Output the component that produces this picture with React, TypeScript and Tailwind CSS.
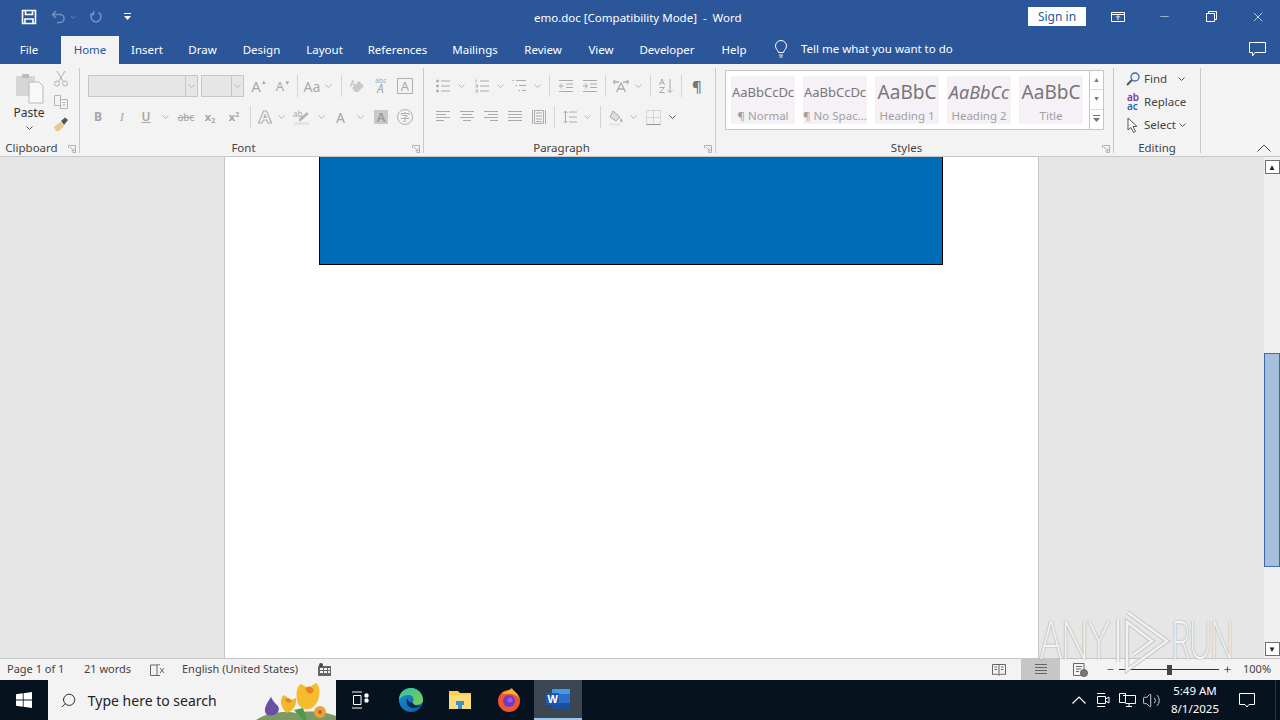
import { ReactNode } from 'react';
import { Minus, Plus, Search, Volume2, X } from 'lucide-react';

const G = '#ababab';

function Ic({ children, size = 16, color = G }: { children: ReactNode; size?: number; color?: string }) {
  return (
    <svg width={size} height={size} viewBox="0 0 16 16" fill="none" stroke={color} strokeWidth="1">
      {children}
    </svg>
  );
}

function Chev({ dark }: { dark?: boolean }) {
  return (
    <svg className="shrink-0" width="7" height="4" viewBox="0 0 7 4" fill="none" stroke={dark ? '#555' : '#b5b5b5'}>
      <path d="M.5.5 3.5 3.5 6.5.5" />
    </svg>
  );
}

// fixed width cell for ribbon items
function Cell({ w, children }: { w: number; children?: ReactNode }) {
  return (
    <div className="flex h-[22px] shrink-0 items-center justify-center" style={{ width: w }}>
      {children}
    </div>
  );
}

function Sep() {
  return <div className="mx-px h-[22px] w-px shrink-0 bg-[#d4d4d4]" />;
}

function Lines({ rows, color }: { rows: [number, number][]; color?: string }) {
  return (
    <Ic color={color}>
      {rows.map(([a, b], i) => (
        <path key={i} d={`M${a} ${2.5 + i * 3}H${b}`} />
      ))}
    </Ic>
  );
}

function Launcher() {
  return (
    <svg width="8" height="8" viewBox="0 0 8 8" fill="none" stroke="#b0b0b0" className="absolute right-[3px] -bottom-[0px]">
      <path d="M.5 3V.5H7.5V7.5H4.5M2 2 6 6M6 3.5V6H3.5" />
    </svg>
  );
}

function Group({ w, label, children, launcher = true }: { w: number; label: string; children: ReactNode; launcher?: boolean }) {
  return (
    <div className="relative h-[85px] border-r border-[#c8c8c8]" style={{ width: w }}>
      <div className="h-[72px]">{children}</div>
      <div className={`text-center text-[11.5px] leading-[16px] text-[#444] ${launcher ? 'pr-[16px]' : ''}`}>{label}</div>
      {launcher && <Launcher />}
    </div>
  );
}

function Tab({ label, w, active }: { label: string; w: number; active?: boolean }) {
  return (
    <div
      className={`flex h-7 items-center justify-center text-[11.5px] ${active ? 'bg-[#f3f3f3] text-[#2b579a]' : 'text-white'}`}
      style={{ width: w }}
    >
      {label}
    </div>
  );
}

function StyleItem({ sample, name, className }: { sample: string; name: string; className: string }) {
  return (
    <div className="flex h-12 w-16 flex-col items-center overflow-hidden bg-[#f6f1f6]">
      <div className={`flex h-[32px] w-full items-center justify-center overflow-hidden pt-[1px] whitespace-nowrap ${className}`}>{sample}</div>
      <div className="text-[11.5px] leading-[16px] whitespace-nowrap text-[#a0a0a0]">{name}</div>
    </div>
  );
}

function TitleBar() {
  return (
    <div className="flex h-9 items-center bg-[#2b579a] text-white">
      <div className="-mt-[2px] flex w-[400px] items-center pl-[21px]">
        <svg width="16" height="16" viewBox="0 0 16 16" fill="none" stroke="white" strokeWidth="1.6">
          <path d="M1.5 1.5H14.5V14.5H1.5Z" />
          <path d="M4.5 1.5V5.5H11.5V1.5M4 14.5V10H12V14.5" />
        </svg>
        <svg className="ml-[14px]" width="15" height="14" viewBox="0 0 15 14" fill="none" stroke="#6f8fc0" strokeWidth="1.6">
          <path d="M5 1 1.5 4.5 5 8M2 4.5H9A4 4 0 0 1 9 12.5H6" />
        </svg>
        <svg className="ml-[4px]" width="6" height="4" viewBox="0 0 7 4" fill="none" stroke="#6f8fc0">
          <path d="M.5.5 3.5 3.5 6.5.5" />
        </svg>
        <svg className="ml-[13px]" width="14" height="14" viewBox="0 0 14 14" fill="none" stroke="#6f8fc0" strokeWidth="1.7">
          <path d="M9.5 2.5A5 5 0 1 1 4.5 2.5M4.500 1V4.500H1" />
        </svg>
        <svg className="ml-[21px]" width="7" height="8" viewBox="0 0 7 8" fill="white">
          <path d="M0 0H7V1H0ZM0 3H7L3.5 7Z" />
        </svg>
      </div>
      <div className="w-[464px] pl-[134px] text-[11.5px] whitespace-pre">emo.doc [Compatibility Mode]  -  Word</div>
      <div className="-mt-[4px] ml-[164px] flex h-[19px] w-[58px] items-center justify-center bg-white pt-px text-[12px] text-[#2b579a]">Sign in</div>
      <div className="-mt-[3px] ml-[25px] flex w-[14px] justify-center">
        <svg width="14" height="12" viewBox="0 0 14 12" fill="none" stroke="white">
          <path d="M.5 1.5H13.5V10.5H.5ZM.5 3.5H13.5M7 9V5M5 6.5 7 4.5 9 6.5" />
        </svg>
      </div>
      <Minus className="-mt-[3px] ml-[33px]" size={13} strokeWidth={1} />
      <div className="-mt-[3px] ml-[35px] flex w-[12px]">
        <svg width="11" height="11" viewBox="0 0 11 11" fill="none" stroke="white">
          <path d="M.5 2.5H8.5V10.5H.5ZM2.5 2.5V.5H10.5V8.5H8.5" />
        </svg>
      </div>
      <X className="-mt-[3px] ml-[32px]" size={16} strokeWidth={1} />
    </div>
  );
}

function TabRow() {
  return (
    <div className="flex h-7 items-center bg-[#2b579a]">
      <Tab label="File" w={58} />
      <div className="w-[3px]" />
      <Tab label="Home" w={58} active />
      <Tab label="Insert" w={56} />
      <Tab label="Draw" w={55} />
      <Tab label="Design" w={63} />
      <Tab label="Layout" w={63} />
      <Tab label="References" w={83} />
      <Tab label="Mailings" w={72} />
      <Tab label="Review" w={64} />
      <Tab label="View" w={52} />
      <Tab label="Developer" w={80} />
      <Tab label="Help" w={54} />
      <svg className="-mt-[2px] ml-[13px]" width="14" height="18" viewBox="0 0 14 18" fill="none" stroke="white">
        <path d="M4.5 12.5C4 10 1.5 9 1.5 6A5.5 5.5 0 0 1 12.5 6C12.5 9 10 10 9.500 12.500ZM5 15H9M5.500 17H8.500" />
      </svg>
      <div className="-mt-[2px] ml-[13px] text-[11.5px] whitespace-nowrap text-white">Tell me what you want to do</div>
      <div className="flex-1" />
      <svg className="-mt-[2px] mr-[14px]" width="17" height="15" viewBox="0 0 17 15" fill="none" stroke="white">
        <path d="M.5.5H16.500V10.500H6L3.500 14V10.500H.5Z" />
      </svg>
    </div>
  );
}

function Clipboard() {
  return (
    <Group w={80} label="Clipboard">
      <div className="flex">
        <div className="flex w-[50px] flex-col items-center pt-[4px] pl-[8px]">
          <svg width="30" height="32" viewBox="0 0 30 32">
            <path d="M2 4H21V24H2Z" fill="#d6d6d6" />
            <path d="M8 2H15V6H8Z" fill="#bdbdbd" />
            <path d="M15 10H25L29 14V31H15Z" fill="#f8f8f8" stroke="#b9b9b9" />
          </svg>
          <div className="mt-[1px] text-[12px] leading-[16px] text-[#333]">Paste</div>
          <div className="mt-[5px]"><Chev dark /></div>
        </div>
        <div className="flex flex-col items-center pt-[2px] pl-[3px]">
          <svg width="16" height="17" viewBox="0 0 16 17" fill="none" stroke="#b0b0b0">
            <path d="M4 1 10 11M12 1 6 11" />
            <circle cx="4" cy="13.500" r="2.500" />
            <circle cx="12" cy="13.500" r="2.500" />
          </svg>
          <svg className="mt-[7px]" width="16" height="16" viewBox="0 0 16 16" fill="none" stroke="#b5b5b5">
            <path d="M1.500 1.500H7.500V11.500H1.500ZM7.500 5.500H14.500V14.500H7.500ZM9.500 8.500H12.500M9.500 11H12.500" />
          </svg>
          <svg className="mt-[6px]" width="16" height="16" viewBox="0 0 16 16">
            <path d="M1 11 7 6 11 10 6 15H3Z" fill="#e8c98a" />
            <path d="M8 5 12 1.500 15 4 11 9Z" fill="#555" />
          </svg>
        </div>
      </div>
    </Group>
  );
}

function FontGroup() {
  return (
    <Group w={344} label="Font">
      <div className="flex flex-col gap-[9px] pt-[7px] pl-[8px]">
        <div className="flex items-center">
          <div className="flex h-[22px] w-[110px] border border-[#c6c6c6] bg-[#e6e6e6]">
            <div className="flex-1" />
            <div className="flex w-[12px] items-center justify-center border-l border-[#c6c6c6]"><Chev /></div>
          </div>
          <div className="ml-[3px] flex h-[22px] w-[43px] border border-[#c6c6c6] bg-[#e6e6e6]">
            <div className="flex-1" />
            <div className="flex w-[12px] items-center justify-center border-l border-[#c6c6c6]"><Chev /></div>
          </div>
          <Cell w={30}><span className="text-[15px] leading-none text-[#aaa]">A<span className="align-top text-[6px]">▲</span></span></Cell>
          <Cell w={18}><span className="text-[13px] leading-none text-[#aaa]">A<span className="align-top text-[6px]">▼</span></span></Cell>
          <Cell w={4} />
          <Sep />
          <Cell w={26}><span className="text-[14px] text-[#aaa]">Aa</span></Cell>
          <Cell w={6}><Chev /></Cell>
          <Cell w={9} />
          <Sep />
          <Cell w={28}>
            <svg width="15" height="15" viewBox="0 0 15 15">
              <path d="M2 9 9 2 14 7 8 13H5Z" fill="#c9c9c9" />
              <text x="0" y="8" fontSize="8" fill="#b5b5b5">A</text>
            </svg>
          </Cell>
          <Cell w={20}>
            <svg width="16" height="18" viewBox="0 0 16 18" fill="#a8a8a8">
              <text x="2" y="6" fontSize="7">abc</text>
              <text x="4" y="16" fontSize="12" fontStyle="italic">A</text>
            </svg>
          </Cell>
          <Cell w={28}>
            <div className="flex h-[16px] w-[16px] items-center justify-center border border-[#b0b0b0] text-[13px] leading-none text-[#aaa]">A</div>
          </Cell>
        </div>
        <div className="flex items-center text-[#a6a6a6]">
          <Cell w={20}><b className="text-[12px]">B</b></Cell>
          <Cell w={28}><i className="font-['Liberation_Serif'] text-[13px]">I</i></Cell>
          <Cell w={20}><span className="text-[12px] font-semibold underline">U</span></Cell>
          <Cell w={18}><Chev /></Cell>
          <Cell w={24}><span className="text-[10px] line-through">abc</span></Cell>
          <Cell w={24}><b className="text-[11px]">x<sub className="text-[7px]">2</sub></b></Cell>
          <Cell w={24}><b className="text-[11px]">x<sup className="text-[7px]">2</sup></b></Cell>
          <Cell w={3} />
          <Sep />
          <Cell w={26}>
            <svg width="16" height="16" viewBox="0 0 16 16" fill="none" stroke="#b0b0b0" strokeWidth="1.200">
              <path d="M1.500 14 6.500 2H9.500L14.500 14H11L9.800 11H6.200L5 14ZM7 8.500H9L8 6Z" />
            </svg>
          </Cell>
          <Cell w={6}><Chev /></Cell>
          <Cell w={34}>
            <svg width="17" height="16" viewBox="0 0 17 16">
              <path d="M1 13H16V16H1Z" fill="#e4e4e4" />
              <path d="M6 10 14 3 15.500 5 8 12H6Z" fill="#b5b5b5" />
              <text x="0" y="8" fontSize="8" fill="#aaa">ab</text>
            </svg>
          </Cell>
          <Cell w={6}><Chev /></Cell>
          <Cell w={33}><span className="text-[14px]">A</span></Cell>
          <Cell w={6}><Chev /></Cell>
          <Cell w={36}>
            <div className="flex h-[14px] w-[14px] items-center justify-center bg-[#c8c8c8] text-[13px] leading-none font-semibold text-[#999]">A</div>
          </Cell>
          <Cell w={12}>
            <div className="flex h-[16px] w-[16px] shrink-0 items-center justify-center rounded-full border border-[#b0b0b0] font-['Noto_Sans_CJK_SC'] text-[10px] leading-none">字</div>
          </Cell>
        </div>
      </div>
    </Group>
  );
}

const bullets = (
  <Ic>
    <path d="M6 3H15M6 8H15M6 13H15" />
    <circle cx="2.500" cy="3" r="1" fill={G} />
    <circle cx="2.500" cy="8" r="1" fill={G} />
    <circle cx="2.500" cy="13" r="1" fill={G} />
  </Ic>
);

const numbers = (
  <Ic>
    <path d="M6 3H15M6 8H15M6 13H15M2 1.500V4.500M1.500 7H3.500V9H1.500M1.500 12H3.500V14H1.500" />
  </Ic>
);

function ParagraphGroup() {
  return (
    <Group w={292} label="Paragraph">
      <div className="flex flex-col gap-[9px] pt-[7px] pl-[10px]">
        <div className="flex items-center">
          <Cell w={18}>{bullets}</Cell>
          <Cell w={18}><Chev /></Cell>
          <Cell w={24}>{numbers}</Cell>
          <Cell w={12}><Chev /></Cell>
          <Cell w={26}>
            <Ic><path d="M5 2.500H15M8 7.500H15M11 12.500H15M1.500 2.500H3M4.500 7.500H6M7.500 12.500H9" /></Ic>
          </Cell>
          <Cell w={10}><Chev /></Cell>
          <Cell w={6} />
          <Sep />
          <Cell w={30}>
            <Ic><path d="M1 2.500H15M8 6H15M8 9.500H15M1 13.500H15M6 8H1.500M4 5.500 1.500 8 4 10.500" /></Ic>
          </Cell>
          <Cell w={18}>
            <Ic><path d="M1 2.500H15M8 6H15M8 9.500H15M1 13.500H15M1 8H5.500M3 5.500 5.500 8 3 10.500" /></Ic>
          </Cell>
          <Cell w={5} />
          <Sep />
          <Cell w={28}>
            <Ic><path d="M2 4H6M2 2 0.500 4 2 6M14 4H10M14 2 15.500 4 14 6M3.500 14 8 5 12.500 14M5 11H11" strokeWidth="1.300" /></Ic>
          </Cell>
          <Cell w={6}><Chev /></Cell>
          <Cell w={8} />
          <Sep />
          <Cell w={28}>
            <Ic><path d="M1.500 7 4 1 6.500 7M2.500 5H5.500M1.500 9.500H6.500L1.500 14.500H6.500M12 1V14.500M9.500 12 12 14.500 14.500 12" /></Ic>
          </Cell>
          <Sep />
          <Cell w={28}><span className="text-[15px] font-semibold text-[#777]">¶</span></Cell>
        </div>
        <div className="flex items-center">
          <Cell w={18}><Lines rows={[[1, 15], [1, 11], [1, 15], [1, 9]]} /></Cell>
          <Cell w={3} />
          <Cell w={24}><Lines rows={[[1, 15], [3, 13], [1, 15], [4, 12]]} /></Cell>
          <Cell w={24}><Lines rows={[[1, 15], [5, 15], [1, 15], [7, 15]]} /></Cell>
          <Cell w={24}><Lines rows={[[1, 15], [1, 15], [1, 15], [1, 15]]} /></Cell>
          <Cell w={24}>
            <Ic><path d="M1.500 1V15M14.500 1V15M3.500 1.500H12.500V14.500H3.500ZM5 4H11M5 7H11M5 10H11M5 12.500H11" /></Ic>
          </Cell>
          <Cell w={2} />
          <Sep />
          <Cell w={28}>
            <Ic><path d="M7 3H15M7 8H15M7 13H15M3.500 2V14M1.500 4 3.500 2 5.500 4M1.500 12 3.500 14 5.500 12" /></Ic>
          </Cell>
          <Cell w={6}><Chev /></Cell>
          <Cell w={9} />
          <Sep />
          <Cell w={28}>
            <svg width="16" height="17" viewBox="0 0 16 17">
              <path d="M5 2 12 8 8 12 2 8Z" fill="#ddd" stroke="#aaa" />
              <path d="M13 9C15 11 15 13 13.500 13S12 11 13 9Z" fill="#aaa" />
              <path d="M1 14.500H12V16.500H1Z" fill="#e3e3e3" />
            </svg>
          </Cell>
          <Cell w={6}><Chev /></Cell>
          <Cell w={2} />
          <Cell w={31}>
            <svg width="15" height="15" viewBox="0 0 15 15" fill="none" stroke="#bbb" strokeDasharray="1 1">
              <path d="M.5.5H14.500V14.500H.5ZM7.500.5V14.500M.5 7.500H14.500" />
              <path d="M.5 14.500H14.500" stroke="#999" strokeDasharray="none" />
            </svg>
          </Cell>
          <Cell w={6}><Chev dark /></Cell>
        </div>
      </div>
    </Group>
  );
}

function StylesGroup() {
  const btn = 'flex h-[20px] items-center justify-center border-b border-[#dcdcdc] last:border-b-0';
  return (
    <Group w={398} label="Styles">
      <div className="pt-[2px] pl-[9px]">
        <div className="flex h-[60px] w-[379px] items-center border border-[#c6c6c6] bg-white pl-[5px]">
          <div className="flex flex-1 gap-2">
            <StyleItem sample="AaBbCcDc" name="¶ Normal" className="text-[13px] text-[#777]" />
            <StyleItem sample="AaBbCcDc" name="¶ No Spac..." className="text-[13px] text-[#777]" />
            <StyleItem sample="AaBbC" name="Heading 1" className="text-[19px] text-[#777]" />
            <StyleItem sample="AaBbCc" name="Heading 2" className="text-[18px] text-[#777] italic" />
            <StyleItem sample="AaBbC" name="Title" className="text-[19px] text-[#777]" />
          </div>
          <div className="flex h-full w-[14px] flex-col border-l border-[#c6c6c6]">
            <div className={btn}><span className="text-[7px] text-[#777]">▲</span></div>
            <div className={btn}><span className="text-[7px] text-[#777]">▼</span></div>
            <div className={btn}>
              <svg width="7" height="8" viewBox="0 0 7 8" fill="#777"><path d="M0 0H7V1H0ZM0 3H7L3.500 7Z" /></svg>
            </div>
          </div>
        </div>
      </div>
    </Group>
  );
}

function EditingGroup() {
  return (
    <Group w={87} label="Editing" launcher={false}>
      <div className="flex flex-col gap-[3px] pt-[1px] pl-[11px] text-[11.5px] leading-[20px] text-[#444]">
        <div className="flex items-center">
          <svg width="16" height="16" viewBox="0 0 16 16" fill="none" stroke="#2b6cb0" strokeWidth="1.300">
            <circle cx="10" cy="6" r="4" />
            <path d="M7 9 2 14" stroke="#555" strokeWidth="2" />
          </svg>
          <span className="ml-[3px]">Find</span>
          <span className="ml-[11px]"><Chev dark /></span>
        </div>
        <div className="flex items-center">
          <svg width="16" height="18" viewBox="0 0 16 18" fontWeight="600" fontSize="10">
            <text x="2" y="8" fill="#7b3f98">ab</text>
            <text x="2" y="17" fill="#2b6cb0">ac</text>
          </svg>
          <span className="ml-[3px]">Replace</span>
        </div>
        <div className="flex items-center">
          <svg className="ml-[1px]" width="14" height="17" viewBox="0 0 14 17" fill="white" stroke="#555">
            <path d="M2 1V13L5 10.500 7.500 15.500 9.500 14.500 7 9.500H11Z" />
          </svg>
          <span className="ml-[4px]">Select</span>
          <span className="ml-[3px]"><Chev dark /></span>
        </div>
      </div>
    </Group>
  );
}

function Ribbon() {
  return (
    <div className="flex h-[93px] border-b border-[#c6c6c6] bg-[#f3f3f3] pt-1">
      <Clipboard />
      <FontGroup />
      <ParagraphGroup />
      <StylesGroup />
      <EditingGroup />
      <div className="flex flex-1 items-end justify-end pr-[9px] pb-[4px]">
        <svg width="14" height="8" viewBox="0 0 14 8" fill="none" stroke="#444">
          <path d="M.5 7.500 7 1 13.500 7.500" />
        </svg>
      </div>
    </div>
  );
}

function Scrollbar() {
  const arrow = 'mx-auto flex h-[14px] w-[15px] items-center justify-center border border-[#6d6d6d] bg-white text-[8px] text-[#222]';
  return (
    <div className="flex w-4 flex-col bg-[#f0f0f0] pt-[3px] pb-[2px]">
      <div className={arrow}>▲</div>
      <div className="h-[179px]" />
      <div className="h-[214px] border border-[#3d6aa6] bg-[#a6bfdc]" />
      <div className="flex-1" />
      <div className={arrow}>▼</div>
    </div>
  );
}

function Doc() {
  return (
    <div className="flex min-h-0 flex-1">
      <div className="flex-1 bg-[#e6e6e6] pl-[224px]">
        <div className="h-full w-[815px] border-x border-[#c6c6c6] bg-white pl-[94px]">
          <div className="h-[108px] w-[624px] border border-t-0 border-black bg-[#006cb8]" />
        </div>
      </div>
      <Scrollbar />
    </div>
  );
}

function StatusBar() {
  return (
    <div className="flex h-[22px] items-center border-t border-[#c6c6c6] bg-[#f3f3f3] text-[11px] text-[#444]">
      <span className="ml-[7px] w-[77px]">Page 1 of 1</span>
      <span className="w-[65px]">21 words</span>
      <svg width="16" height="14" viewBox="0 0 16 14" fill="none" stroke="#666">
        <path d="M8 2H1.500V12.500H8V2C9 1.500 10 1.500 11 2M11 12.500H8M11 5 15 10M15 5 11 10" />
      </svg>
      <span className="ml-[17px] w-[136px]">English (United States)</span>
      <svg width="13" height="13" viewBox="0 0 13 13">
        <path d="M0 3H13V13H0Z" fill="#666" />
        <path d="M2 5H5V7H2ZM6 5H9V7H6ZM10 5H12V7H10ZM2 8H5V10H2ZM6 8H9V10H6ZM10 8H12V10H10Z" fill="#f3f3f3" />
        <circle cx="3" cy="2" r="2" fill="#444" />
      </svg>
      <div className="ml-[661px] flex h-full items-center">
        <svg width="14" height="13" viewBox="0 0 14 13" fill="none" stroke="#666">
          <path d="M.5 1.500H7V12C5 11 3 11 .5 11.500ZM7 1.500H13.500V11.500C11 11 9 11 7 12M2.500 4H5M2.500 6.500H5M9 4H11.500M9 6.500H11.500" />
        </svg>
        <div className="ml-[15px] flex h-full w-[39px] items-center justify-center bg-[#c6c6c6]">
          <Lines color="#666" rows={[[2, 14], [2, 14], [2, 14], [2, 14]]} />
        </div>
        <svg className="ml-[13px]" width="15" height="14" viewBox="0 0 15 14" fill="none" stroke="#666">
          <path d="M9 12.500H.5V.5H11V6M3 3.500H9M3 6H8M3 8.500H6" />
          <circle cx="11" cy="10" r="3.500" fill="#777" />
        </svg>
        <Minus className="ml-[18px]" size={9} color="#333" />
        <div className="ml-[4px] flex h-[1px] w-[100px] items-center justify-center bg-[#333]">
          <div className="h-[10px] w-[5px] bg-[#444]" />
        </div>
        <Plus className="ml-[4px]" size={9} color="#333" />
        <span className="ml-[11px]">100%</span>
      </div>
    </div>
  );
}

function Taskbar() {
  return (
    <div className="flex h-10 items-center bg-[#07121f] text-white">
      <div className="flex w-12 justify-center">
        <svg width="16" height="16" viewBox="0 0 16 16" fill="white">
          <path d="M0 2.300 6.800 1.300V7.600H0ZM7.600 1.200 16 0V7.600H7.600ZM0 8.400H6.800V14.700L0 13.700ZM7.600 8.400H16V16L7.600 14.800Z" />
        </svg>
      </div>
      <div className="flex h-full w-[288px] items-center overflow-hidden bg-[#f3f3f3] pl-[12px] text-[#222]">
        <Search size={17} strokeWidth={1.2} className="-scale-x-100" color="#111" />
        <span className="ml-[11px] w-[170px] text-[14px] whitespace-nowrap">Type here to search</span>
        <svg className="shrink-0" width="80" height="40" viewBox="0 0 80 40">
          <path d="M0 40C12 32 30 31 40 33 55 30 70 32 80 36V40Z" fill="#7d9a64" />
          <path d="M15 17C11 23 6 30 11 35 19 37 25 32 22 26 19 23 17 21 15 17Z" fill="#6a4fa3" />
          <path d="M28 15C23 18 24 28 31 33 37 31 41 26 40 18L35 20Z" fill="#f3b72c" />
          <path d="M45 4C41 6 39 14 42 24 47 32 58 31 62 20 65 12 63 5 60 3L52 8Z" fill="#f5bd2d" />
          <path d="M49 9C52 5 55 6 58 10 56 15 52 15 49 9Z" fill="#e58325" />
          <path d="M29 20C31 17 34 18 36 21 34 24 31 23 29 20Z" fill="#e58325" />
          <circle cx="64" cy="32" r="6" fill="#eba23a" />
          <circle cx="64" cy="32" r="2" fill="#c4621f" />
          <path d="M47 28 51 40H47L38 30Z" fill="#4f9a4a" />
        </svg>
      </div>
      <div className="ml-[15px] flex w-[18px] justify-center">
        <svg width="18" height="18" viewBox="0 0 18 18" fill="none" stroke="white">
          <path d="M1 1H11M1 17H11M2.500 4.500H10V13.500H2.500Z" />
          <path d="M14 3H17V6H14ZM14 8H17V11H14Z" fill="white" />
        </svg>
      </div>
      <div className="ml-[29px] flex w-[26px] justify-center">
        <svg width="26" height="26" viewBox="0 0 26 26">
          <defs>
            <linearGradient id="edgeA" x1="0" y1="0" x2="1" y2="1">
              <stop offset="0" stopColor="#35c1a0" />
              <stop offset="1" stopColor="#7ad14e" />
            </linearGradient>
            <linearGradient id="edgeB" x1="0" y1="0" x2="1" y2="1">
              <stop offset="0" stopColor="#1b8fd6" />
              <stop offset="1" stopColor="#0d5ca6" />
            </linearGradient>
          </defs>
          <circle cx="13" cy="13" r="12" fill="url(#edgeB)" />
          <path d="M1 13C1 5 7 1 13 1 20 1 25 7 25 13 25 17 21 18 17 18 14 18 13 17 14.500 15.500 17 13 15 8 11 8 6 8 3 10 1 13Z" fill="url(#edgeA)" />
          <path d="M14.500 15.500C12 16 9 14 10 11 7 14 9 21 15 21 19 21 22 20 24 18 21 19 16 19 14.500 15.500Z" fill="#0a2a55" />
        </svg>
      </div>
      <div className="ml-[25px] flex w-[22px] justify-center">
        <svg width="22" height="20" viewBox="0 0 22 20">
          <path d="M0 1H9L11 3H22V19H0Z" fill="#f7cf52" />
          <path d="M0 5H22V19H0Z" fill="#fbdc78" />
          <path d="M7 11H15V15H13V19H9V15H7Z" fill="#3a8fd6" />
        </svg>
      </div>
      <div className="ml-[26px] flex w-[24px] justify-center">
        <svg width="24" height="24" viewBox="0 0 24 24">
          <circle cx="12" cy="13" r="11" fill="#f0552b" />
          <path d="M5 5C9 4 14 1 15 0 16 3 22 6 23 13 22 8 17 6 14 6 10 5 7 7 5 5Z" fill="#fbb125" />
          <circle cx="12" cy="13" r="6" fill="#6e3bc9" />
          <circle cx="13" cy="12" r="2.500" fill="#a35be0" />
        </svg>
      </div>
      <div className="ml-[13px] flex h-full w-12 items-center justify-center border-b-[2px] border-[#9cc4ec] bg-[#3b4650]">
        <svg width="24" height="20" viewBox="0 0 24 20">
          <path d="M6 0H24V20H6Z" fill="#2b6fc7" />
          <path d="M6 0H24V5H6Z" fill="#3f9ae8" />
          <path d="M6 14H24V20H6Z" fill="#1b4e9c" />
          <path d="M0 4H13V16H0Z" fill="#1f56ad" />
          <text x="1.500" y="14" fontSize="11" fontWeight="700" fill="white" fontFamily="Liberation Sans">W</text>
        </svg>
      </div>
      <div className="flex-1" />
      <svg className="-ml-[2px]" width="14" height="8" viewBox="0 0 14 8" fill="none" stroke="white" strokeWidth="1.200">
        <path d="M.5 7.500 7 1 13.500 7.500" />
      </svg>
      <svg className="ml-[10px]" width="14" height="18" viewBox="0 0 14 18" fill="none" stroke="white">
        <path d="M1 2.500H9M1 15.500H9M1.500 5.500H9.500V12.500H1.500ZM9.500 8 13 6V12L9.500 10" />
      </svg>
      <svg className="ml-[9px]" width="17" height="14" viewBox="0 0 17 14" fill="none" stroke="white">
        <path d="M.5.5H6.500V9.500H.5ZM4 2.500H16.500V10.500H6.500M10 10.500V13.500M7 13.500H13" />
      </svg>
      <Volume2 className="ml-[6px]" size={19} strokeWidth={1} />
      <div className="ml-[6px] flex w-[56px] flex-col items-center text-[11.5px] leading-[18px]">
        <span>5:49 AM</span>
        <span>8/1/2025</span>
      </div>
      <svg className="ml-[16px]" width="16" height="15" viewBox="0 0 16 15" fill="none" stroke="white">
        <path d="M.5.5H15.500V11.500H10L8 14 6 11.500H.5Z" />
      </svg>
      <div className="ml-[20px] h-full w-px bg-[#2a3644]" />
      <div className="w-[4px]" />
    </div>
  );
}

function Watermark() {
  const text = "shrink-0 font-['Inter'] text-[52px] leading-none font-extralight text-[#f4f4f4] [text-shadow:0_0_2px_rgba(0,0,0,0.4)]";
  return (
    <div className="pointer-events-none absolute top-[608px] left-[1039px] flex h-[66px] w-[260px] items-center">
      <span className={`${text} w-[70px] origin-left scale-x-[0.7] tracking-tighter`}>ANY</span>
      <svg className="shrink-0" width="62" height="66" viewBox="0 0 62 66" fill="none">
        <g stroke="#b8b8b8" strokeOpacity="0.7" strokeWidth="4.500">
          <path d="M18 4 58 33 18 62V14L43 33 24 47" />
          <path d="M9 12V54" />
        </g>
        <g stroke="#f2f2f2" strokeWidth="2.500">
          <path d="M18 4 58 33 18 62V14L43 33 24 47" />
          <path d="M9 12V54" />
        </g>
      </svg>
      <span className={`${text} origin-left scale-x-[0.6] tracking-tighter`}>RUN</span>
    </div>
  );
}

export default function App() {
  return (
    <div className="relative flex h-[720px] w-[1280px] flex-col overflow-hidden font-['Noto_Sans','Open_Sans',sans-serif]">
      <TitleBar />
      <TabRow />
      <Ribbon />
      <Doc />
      <StatusBar />
      <Taskbar />
      <Watermark />
    </div>
  );
}
